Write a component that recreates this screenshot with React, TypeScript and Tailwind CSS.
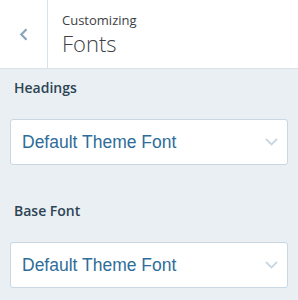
import React from 'react';

const FontSelect: React.FC<{ value: string }> = ({ value }) => (
  <div className="flex h-[46px] items-center justify-between rounded-[3px] border border-[#c8d7e1] bg-white pl-[11px] pr-[9px]">
    <span className="font-['Liberation_Sans',Arial,sans-serif] text-[17.5px] text-[#2e6d99]">{value}</span>
    <svg width="13" height="8" viewBox="0 0 13 8" fill="none">
      <path d="M1 1l5.5 5.5L12 1" stroke="#c8d7e1" strokeWidth="1.8" />
    </svg>
  </div>
);

const App: React.FC = () => {
  const sections = [
    { label: 'Headings', value: 'Default Theme Font' },
    { label: 'Base Font', value: 'Default Theme Font' },
  ];

  return (
    <div className="h-[300px] w-[298px] overflow-hidden bg-[#e9eff3] font-['Open_Sans',sans-serif]">
      {/* Header */}
      <div className="flex h-[69px] border-b border-[#d8e2e9] bg-white">
        <button className="flex w-[48px] items-center justify-center border-r border-[#d8e2e9]">
          <svg width="9" height="13" viewBox="0 0 9 13" fill="none">
            <path d="M7.5 1.2l-5.2 5.3 5.2 5.3" stroke="#87a6bc" strokeWidth="2.2" />
          </svg>
        </button>
        <div className="flex flex-col justify-center pl-[14px]">
          <span className="text-[13px] leading-[17px] text-[#3d4145]">Customizing</span>
          <span className="text-[22px] font-light leading-[28px] text-[#3d4145]">Fonts</span>
        </div>
      </div>

      {/* Sections */}
      <div className="px-[10px] pt-[9px]">
        {sections.map((s) => (
          <div key={s.label} className="mb-[36px]">
            <p className="mb-[21px] pl-[4px] text-[14px] font-semibold leading-[20px] text-[#2e4453]">{s.label}</p>
            <FontSelect value={s.value} />
          </div>
        ))}
      </div>
    </div>
  );
};

export default App;
